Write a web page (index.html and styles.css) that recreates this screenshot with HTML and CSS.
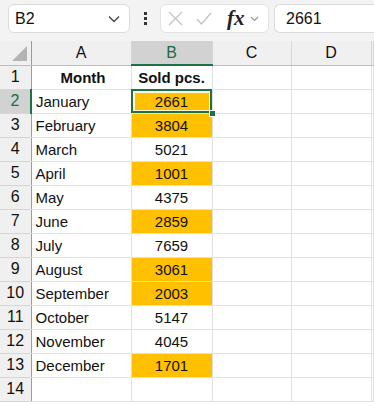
FILE: index.html
```html
<!DOCTYPE html>
<html lang="en">
<head>
    <meta charset="UTF-8">
    <title>Sold pcs.</title>
    <link rel="stylesheet" href="styles.css">
</head>
<body>
    <div class="toolbar">
        <div class="namebox">
            <span>B2</span>
            <svg width="12" height="8" viewBox="0 0 12 8"><path d="M1 1.5 L6 6.5 L11 1.5" fill="none" stroke="#444" stroke-width="1.3"/></svg>
        </div>
        <div class="dots"><i></i><i></i><i></i></div>
        <div class="fxbox">
            <svg width="15" height="15" viewBox="0 0 15 15"><path d="M1 1 L14 14 M14 1 L1 14" stroke="#c4c4c4" stroke-width="1.4" fill="none"/></svg>
            <svg width="16" height="13" viewBox="0 0 16 13"><path d="M1 7 L5.5 12 L15 1" stroke="#c4c4c4" stroke-width="1.4" fill="none"/></svg>
            <span class="fx">fx</span>
            <svg width="9" height="6" viewBox="0 0 9 6"><path d="M1 1 L4.5 4.5 L8 1" fill="none" stroke="#9a9a9a" stroke-width="1.2"/></svg>
        </div>
        <div class="formula">2661</div>
    </div>

    <table class="sheet">
        <colgroup>
            <col class="c-row">
            <col class="c-a">
            <col class="c-b">
            <col class="c-c">
            <col class="c-d">
            <col>
        </colgroup>
        <thead>
            <tr>
                <th class="corner"><span class="tri"></span></th>
                <th>A</th>
                <th class="sel">B</th>
                <th>C</th>
                <th>D</th>
                <th></th>
            </tr>
        </thead>
        <tbody id="rows"></tbody>
    </table>

    <script>
        var data = [
            ['January', 2661, true],
            ['February', 3804, true],
            ['March', 5021, false],
            ['April', 1001, true],
            ['May', 4375, false],
            ['June', 2859, true],
            ['July', 7659, false],
            ['August', 3061, true],
            ['September', 2003, true],
            ['October', 5147, false],
            ['November', 4045, false],
            ['December', 1701, true]
        ];

        var body = document.getElementById('rows');
        var html = '<tr><th>1</th><td class="head">Month</td><td class="head num">Sold pcs.</td><td></td><td></td><td></td></tr>';

        data.forEach(function (d, i) {
            var n = i + 2;
            var cls = 'num' + (d[2] ? ' hi' : '') + (n == 2 ? ' active' : '');
            html += '<tr><th' + (n == 2 ? ' class="sel"' : '') + '>' + n + '</th>' +
                '<td>' + d[0] + '</td>' +
                '<td class="' + cls + '">' + d[1] + (n == 2 ? '<span class="handle"></span>' : '') + '</td>' +
                '<td></td><td></td><td></td></tr>';
        });

        html += '<tr><th>14</th><td></td><td></td><td></td><td></td><td></td></tr>';
        body.innerHTML = html;
    </script>
</body>
</html>
```

FILE: styles.css
```css
* {
    padding: 0;
    margin: 0;
    box-sizing: border-box;
}

body {
    width: 374px;
    height: 406px;
    overflow: hidden;
    background: #fff;
    font-family: 'Liberation Sans', Arial, sans-serif;
    color: #111;
}

.toolbar {
    height: 41px;
    background: #f3f3f3;
    display: flex;
    align-items: flex-start;
    padding-top: 4px;
    padding-left: 8px;
    overflow: hidden;
}

.namebox {
    width: 122px;
    flex: none;
    height: 29px;
    background: #fff;
    border: 1px solid #dcdcdc;
    border-radius: 6px;
    display: flex;
    align-items: center;
    justify-content: space-between;
    padding: 0 9px 0 6px;
    font-size: 16px;
}

.dots {
    width: 30px;
    flex: none;
    height: 29px;
    display: flex;
    flex-direction: column;
    align-items: center;
    justify-content: center;
    gap: 2px;
}

.dots i {
    display: block;
    width: 3px;
    height: 3px;
    background: #333;
}

.fxbox {
    width: 109px;
    flex: none;
    height: 29px;
    background: #fff;
    border: 1px solid #e2e2e2;
    border-radius: 6px;
    display: flex;
    align-items: center;
    padding-left: 7px;
    gap: 13px;
}

.fxbox .fx {
    font-family: 'Liberation Serif', serif;
    font-style: italic;
    font-weight: bold;
    font-size: 21px;
    color: #222;
    margin-left: 2px;
    margin-right: -8px;
}

.formula {
    margin-left: 5px;
    flex: 1;
    min-width: 0;
    height: 29px;
    background: #fff;
    border: 1px solid #dcdcdc;
    border-right: none;
    border-radius: 6px 0 0 6px;
    padding-left: 11px;
    line-height: 27px;
    font-size: 16px;
}

.sheet {
    border-collapse: collapse;
    table-layout: fixed;
    width: 374px;
    font-size: 15px;
}

.c-row { width: 31px; }
.c-a { width: 100px; }
.c-b { width: 81px; }
.c-c { width: 79px; }
.c-d { width: 80px; }

th, td {
    height: 24px;
    padding: 0;
    white-space: nowrap;
}

thead th {
    background: #f0f0f0;
    font-weight: normal;
    font-size: 16px;
    border-right: 1px solid #d6d6d6;
    border-bottom: 1px solid #bdbdbd;
    height: 24px;
    padding-top: 1px;
}

thead th.sel {
    background: #d2d2d2;
    color: #1e6b41;
    border-bottom: 2px solid #1e7145;
}

thead th.corner {
    position: relative;
    border-right: 1px solid #9c9c9c;
}

.tri {
    position: absolute;
    right: 4px;
    bottom: 4px;
    width: 0;
    height: 0;
    border-left: 15px solid transparent;
    border-bottom: 15px solid #b4b4b4;
}

tbody th {
    background: #f0f0f0;
    font-weight: normal;
    font-size: 16px;
    border-bottom: 1px solid #d6d6d6;
    border-right: 1px solid #9c9c9c;
    text-align: center;
}

tbody th.sel {
    background: #d2d2d2;
    color: #1e6b41;
    border-right: 2px solid #1e7145;
}

td {
    border-right: 1px solid #e1e1e1;
    border-bottom: 1px solid #e1e1e1;
    padding-left: 4px;
}

td.head {
    font-weight: bold;
    text-align: center;
}

td.num {
    text-align: center;
    padding-left: 0;
}

td.hi {
    background: #ffc000;
}

td.active {
    position: relative;
    outline: 2px solid #1e7145;
    outline-offset: -2px;
    box-shadow: inset 0 0 0 3px #fff9e0;
}

.handle {
    position: absolute;
    right: -4px;
    bottom: -4px;
    width: 7px;
    height: 7px;
    background: #1e7145;
    border: 1px solid #fff;
}
```
